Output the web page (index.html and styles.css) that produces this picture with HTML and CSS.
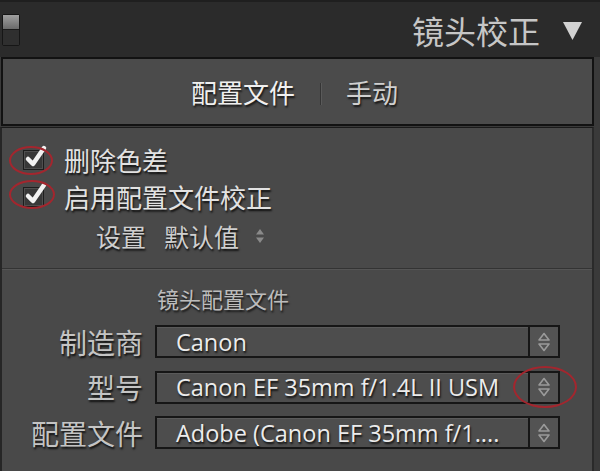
FILE: index.html
```html
<!DOCTYPE html>
<html lang="zh-CN">
<head>
    <meta charset="UTF-8">
    <meta name="viewport" content="width=device-width, initial-scale=1.0">
    <title>镜头校正</title>
    <link rel="stylesheet" href="styles.css">
</head>
<body>
    <div class="panel">
        <div class="panel-head">
            <span class="solo-toggle"><span class="solo-on"></span><span class="solo-off"></span></span>
            <div class="panel-title">
                <span>镜头校正</span>
                <svg class="disclosure" width="21" height="21" viewBox="0 0 21 21">
                    <polygon points="1,2 20,2 10.5,20" fill="#d2d2d2"/>
                </svg>
            </div>
        </div>

        <div class="tabs">
            <span class="tab active">配置文件</span>
            <span class="tab-sep"></span>
            <span class="tab">手动</span>
        </div>

        <div class="panel-body">
            <div class="options">
                <div class="check-row">
                    <span class="checkbox">
                        <svg width="26" height="26" viewBox="0 0 26 26">
                            <path d="M6 15 L11 20 L22 4" fill="none" stroke="#f2f2f2" stroke-width="4.5" stroke-linecap="round" stroke-linejoin="round"/>
                        </svg>
                        <span class="note-ring ring-one"></span>
                    </span>
                    <span class="check-label">删除色差</span>
                </div>
                <div class="check-row">
                    <span class="checkbox">
                        <svg width="26" height="26" viewBox="0 0 26 26">
                            <path d="M6 15 L11 20 L22 4" fill="none" stroke="#f2f2f2" stroke-width="4.5" stroke-linecap="round" stroke-linejoin="round"/>
                        </svg>
                        <span class="note-ring ring-two"></span>
                    </span>
                    <span class="check-label">启用配置文件校正</span>
                </div>
                <div class="setup-row">
                    <span class="setup-name">设置</span>
                    <span class="setup-value">默认值</span>
                    <svg class="mini-stepper" width="10" height="18" viewBox="0 0 10 18">
                        <polygon points="5,2 9,7.5 1,7.5" fill="#8a8a8a"/>
                        <polygon points="5,16 9,10.5 1,10.5" fill="#8a8a8a"/>
                    </svg>
                </div>
            </div>

            <div class="divider"></div>

            <div class="profile">
                <div class="profile-title">镜头配置文件</div>

                <div class="field-row">
                    <span class="field-label">制造商</span>
                    <div class="select">
                        <span class="select-value">Canon</span>
                        <span class="select-stepper">
                            <svg width="14" height="22" viewBox="0 0 14 22">
                                <path d="M7 2.5 L12 9 L2 9 Z M7 19.5 L12 13 L2 13 Z" fill="none" stroke="#9a9a9a" stroke-width="1.6" stroke-linejoin="round"/>
                            </svg>
                        </span>
                    </div>
                </div>

                <div class="field-row">
                    <span class="field-label">型号</span>
                    <div class="select">
                        <span class="select-value">Canon EF 35mm f/1.4L II USM</span>
                        <span class="select-stepper">
                            <svg width="14" height="22" viewBox="0 0 14 22">
                                <path d="M7 2.5 L12 9 L2 9 Z M7 19.5 L12 13 L2 13 Z" fill="none" stroke="#9a9a9a" stroke-width="1.6" stroke-linejoin="round"/>
                            </svg>
                            <span class="note-ring ring-three"></span>
                        </span>
                    </div>
                </div>

                <div class="field-row">
                    <span class="field-label">配置文件</span>
                    <div class="select">
                        <span class="select-value">Adobe (Canon EF 35mm f/1....</span>
                        <span class="select-stepper">
                            <svg width="14" height="22" viewBox="0 0 14 22">
                                <path d="M7 2.5 L12 9 L2 9 Z M7 19.5 L12 13 L2 13 Z" fill="none" stroke="#9a9a9a" stroke-width="1.6" stroke-linejoin="round"/>
                            </svg>
                        </span>
                    </div>
                </div>
            </div>
        </div>
    </div>
</body>
</html>
```

FILE: styles.css
```css
body {
    margin: 0;
    background: #3a3a3a;
    font-family: "Open Sans", "Noto Sans CJK SC", sans-serif;
    color: #d8d8d8;
}
.panel {
    width: 600px;
    height: 471px;
    overflow: hidden;
    background: #3a3a3a;
}
.panel-head {
    height: 55px;
    border-top: 2px solid #1f1f1f;
    background: #2b2b2b;
    display: flex;
    align-items: center;
    justify-content: space-between;
    padding: 0 17px 0 2px;
}
.solo-toggle {
    display: flex;
    flex-direction: column;
    width: 16px;
    height: 30px;
    border: 1px solid #161616;
    border-radius: 2px;
}
.solo-on {
    flex: 1;
    background: linear-gradient(#a0a0a0, #6a6a6a);
}
.solo-off {
    flex: 1;
    background: #2f2f2f;
    border-top: 1px solid #1a1a1a;
}
.panel-title {
    display: flex;
    align-items: center;
    gap: 22px;
    font-size: 32px;
    color: #c6c6c6;
    font-family: "Noto Sans CJK SC", sans-serif;
}
.disclosure {
    margin-top: 2px;
}
.tabs {
    height: 65px;
    margin: 0 6px 0 1px;
    border: 2px solid #121212;
    background: #4b4b4b;
    display: flex;
    align-items: center;
    justify-content: center;
    padding-right: 6px;
}
.tab {
    font-family: "Noto Sans CJK SC", sans-serif;
    font-size: 26px;
    color: #d0d0d0;
    text-shadow: 1px 2px 2px rgba(0, 0, 0, 0.75);
}
.tab.active {
    color: #f0f0f0;
}
.tab-sep {
    width: 1px;
    height: 22px;
    margin: 4px 25px 0;
    background: #353535;
    box-shadow: 1px 0 0 #5a5a5a;
}
.panel-body {
    margin-top: 1px;
    width: 590px;
    height: 339px;
    border-left: 2px solid #262626;
    border-right: 2px solid #2a2a2a;
    border-top: 1px solid #1a1a1a;
    border-bottom: 2px solid #2a2a2a;
    background: #494949;
    padding-top: 13px;
}
.options {
    display: flex;
    flex-direction: column;
}
.check-row {
    height: 37px;
    display: flex;
    align-items: center;
    padding-left: 21px;
    font-size: 26px;
    font-family: "Noto Sans CJK SC", sans-serif;
    color: #e2e2e2;
    text-shadow: 1px 2px 2px rgba(0, 0, 0, 0.8);
}
.checkbox {
    position: relative;
    width: 19px;
    height: 18px;
    border: 1px solid #1d1d1d;
    background: #383838;
    box-shadow: inset 0 0 0 1px #4f4f4f;
    margin-right: 20px;
}
.checkbox svg {
    position: absolute;
    left: -2px;
    top: -7px;
}
.note-ring {
    position: absolute;
    border: 2px solid #a3262e;
    border-radius: 50%;
}
.ring-one {
    left: -15px;
    top: -5px;
    width: 40px;
    height: 25px;
}
.ring-two {
    left: -15px;
    top: -8px;
    width: 42px;
    height: 25px;
}
.setup-row {
    height: 42px;
    display: flex;
    align-items: center;
    padding-left: 94px;
    font-family: "Noto Sans CJK SC", sans-serif;
    font-size: 25px;
    color: #cfcfcf;
    text-shadow: 1px 2px 2px rgba(0, 0, 0, 0.8);
}
.setup-value {
    margin-left: 18px;
}
.mini-stepper {
    margin-left: 16px;
}
.divider {
    margin-top: 11px;
    height: 1px;
    background: #333;
    border-bottom: 1px solid #555;
}
.profile {
    padding-top: 13px;
}
.profile-title {
    height: 30px;
    line-height: 30px;
    padding-left: 155px;
    font-family: "Noto Sans CJK SC", sans-serif;
    font-size: 22px;
    color: #bcbcbc;
    text-shadow: 1px 2px 2px rgba(0, 0, 0, 0.7);
    margin-bottom: 12px;
}
.field-row {
    display: flex;
    align-items: center;
    height: 33px;
    margin-bottom: 12.5px;
}
.field-label {
    width: 141px;
    text-align: right;
    margin-right: 12px;
    font-family: "Noto Sans CJK SC", sans-serif;
    font-size: 28px;
    color: #c4c4c4;
    text-shadow: 1px 2px 2px rgba(0, 0, 0, 0.8);
}
.select {
    width: 405px;
    height: 33px;
    box-sizing: border-box;
    border: 2px solid #161616;
    background: #4d4d4d;
    display: flex;
    align-items: stretch;
}
.select-value {
    flex: 1;
    display: flex;
    align-items: center;
    padding-left: 19px;
    font-size: 23.5px;
    color: #ececec;
    white-space: nowrap;
    text-shadow: 1px 2px 2px rgba(0, 0, 0, 0.8);
    box-shadow: inset 0 1px 0 #5a5a5a;
}
.select-stepper {
    position: relative;
    width: 28px;
    border-left: 2px solid #161616;
    background: #535353;
    display: flex;
    align-items: center;
    justify-content: center;
}
.ring-three {
    left: -17px;
    top: -7px;
    width: 60px;
    height: 38px;
}
```
